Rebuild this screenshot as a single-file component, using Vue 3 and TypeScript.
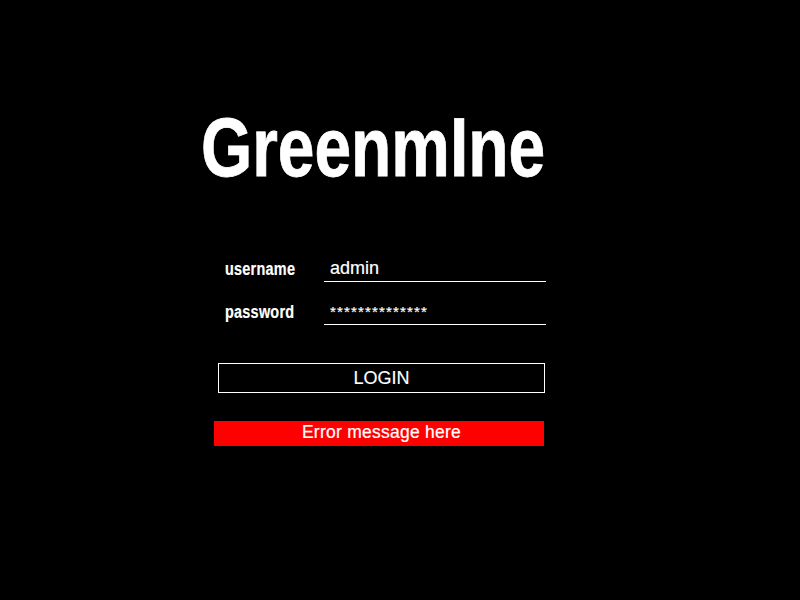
<script setup lang="ts">
import { ref } from 'vue'

const username = ref('admin')
const masked = ref('*'.repeat(14))
const error = ref('Error message here')
</script>

<template>
  <main class="screen">
    <h1 class="title"><span class="title-text">GreenmIne</span></h1>
    <form class="form" @submit.prevent>
      <div class="row">
        <label class="label"><span class="label-text">username</span></label>
        <div class="field">{{ username }}</div>
      </div>
      <div class="row">
        <label class="label"><span class="label-text">password</span></label>
        <div class="field stars">{{ masked }}</div>
      </div>
      <button class="login" type="submit">LOGIN</button>
      <div class="error">{{ error }}</div>
    </form>
  </main>
</template>

<style>
body {
  background: #000;
}
</style>

<style scoped>
.screen {
  width: 800px;
  height: 600px;
  box-sizing: border-box;
  padding: 97px 0 0 200px;
  background: #000;
  color: #fff;
  font-family: "Liberation Sans", Arial, sans-serif;
  overflow: hidden;
}
.title {
  margin: 0;
  height: 100px;
  line-height: 100px;
  padding-left: 1px;
  font-size: 84px;
  font-weight: bold;
  white-space: nowrap;
}
.title-text {
  display: inline-block;
  transform: scaleX(0.784);
  transform-origin: left center;
  -webkit-text-stroke: 0.8px #fff;
}
.form {
  display: flex;
  flex-direction: column;
  padding-top: 56px;
}
.row {
  display: flex;
  height: 29px;
  margin-bottom: 14px;
}
.label {
  width: 99px;
  padding-left: 25px;
  line-height: 32px;
  font-size: 17.5px;
  font-weight: bold;
}
.label-text {
  display: inline-block;
  letter-spacing: 0.3px;
  transform: scaleX(0.825);
  transform-origin: left center;
  -webkit-text-stroke: 0.2px #fff;
}
.field {
  box-sizing: border-box;
  width: 222px;
  height: 29px;
  padding-left: 6px;
  border-bottom: 1px solid #fff;
  line-height: 30px;
  font-size: 18px;
  -webkit-text-stroke: 0.2px #fff;
}
.stars {
  line-height: 31px;
  font-size: 15px;
  letter-spacing: 1.16px;
  -webkit-text-stroke: 0.2px #fff;
}
.login {
  width: 327px;
  height: 30px;
  margin: 24px 0 0 18px;
  padding: 0;
  border: 1px solid #fff;
  background: #000;
  color: #fff;
  font: 18px/28px "Liberation Sans", Arial, sans-serif;
  -webkit-text-stroke: 0.15px #fff;
}
.error {
  width: 330px;
  height: 25px;
  margin: 28px 0 0 14px;
  box-sizing: border-box;
  padding-left: 5px;
  background: #f00;
  line-height: 23px;
  font-size: 17.5px;
  letter-spacing: 0.25px;
  text-align: center;
  -webkit-text-stroke: 0.2px #fff;
}
</style>
